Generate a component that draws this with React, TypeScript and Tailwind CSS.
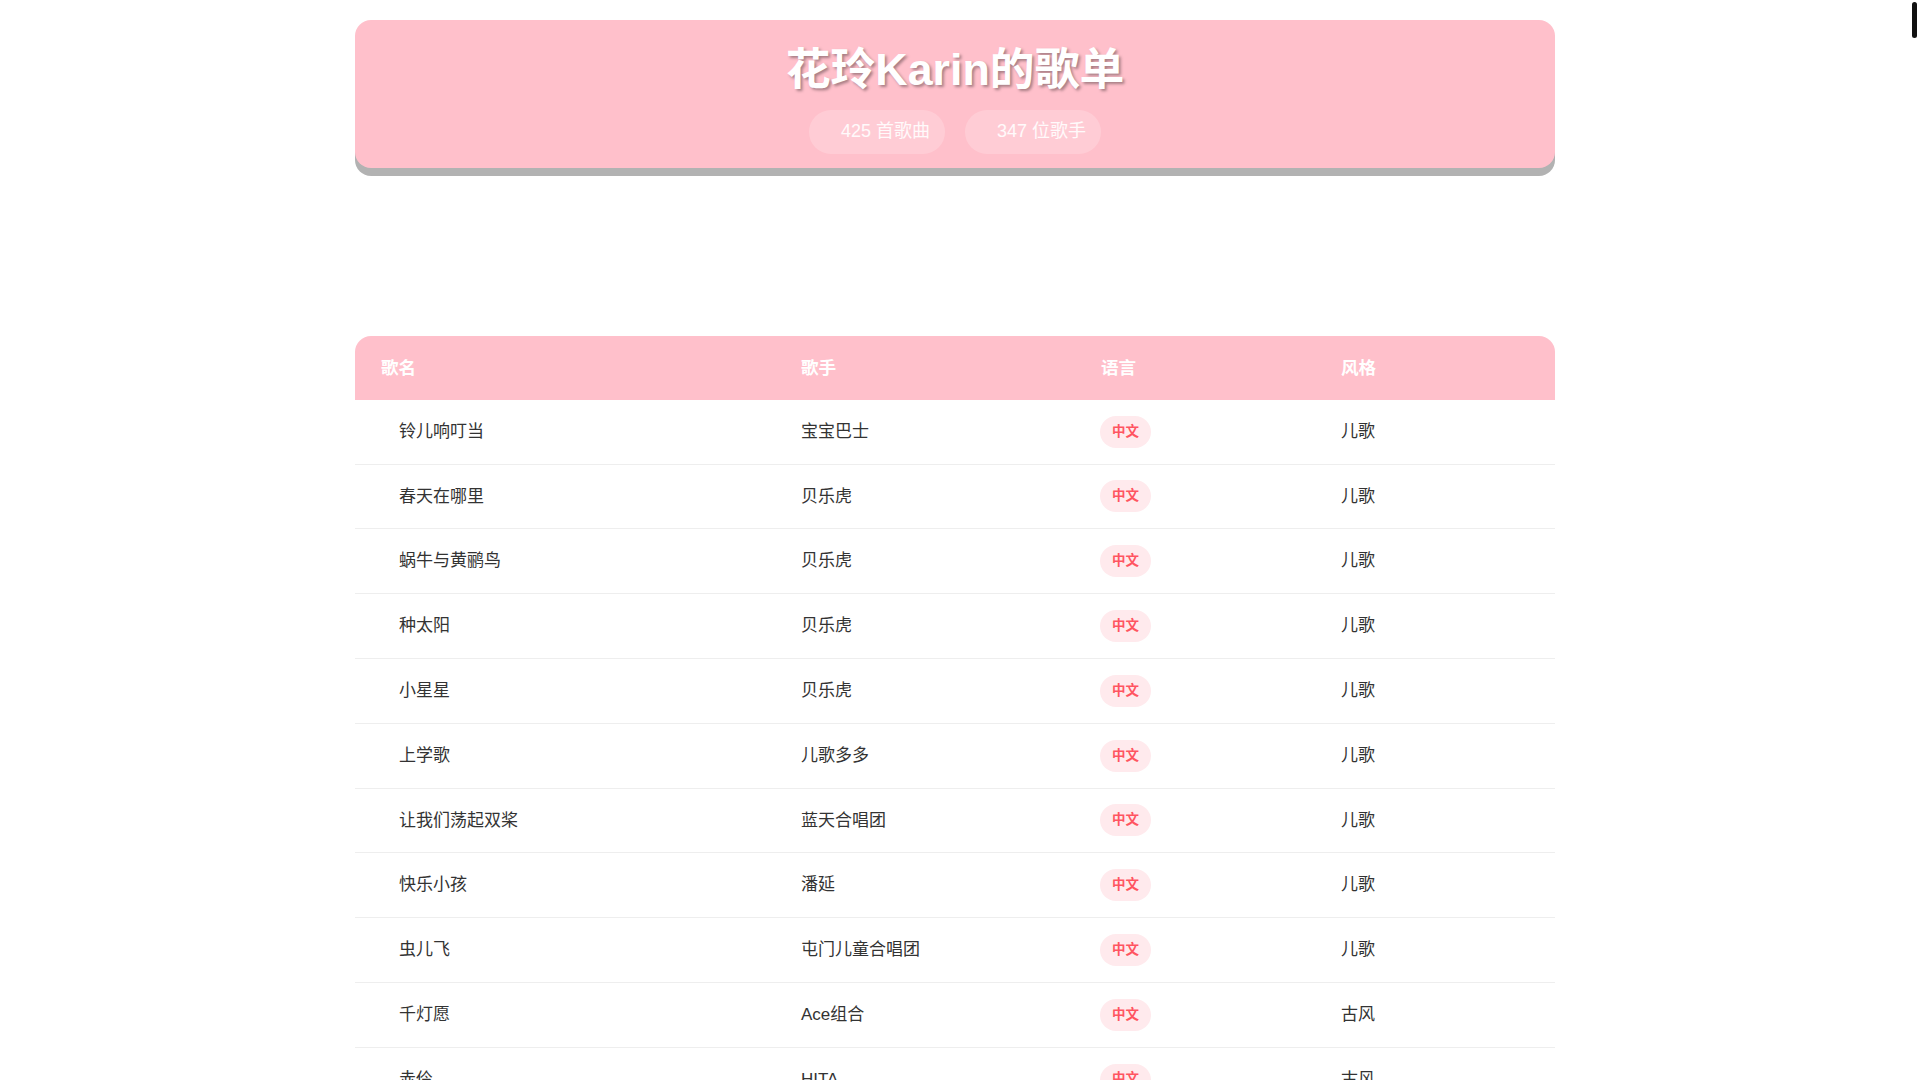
import { useMemo } from "react";

interface Song {
  name: string;
  singer: string;
  lang: string;
  style: string;
}

// 前几首按截图顺序，后面循环补足 425 首
const SONGS: Song[] = [
  { name: "铃儿响叮当", singer: "宝宝巴士", lang: "中文", style: "儿歌" },
  { name: "春天在哪里", singer: "贝乐虎", lang: "中文", style: "儿歌" },
  { name: "蜗牛与黄鹂鸟", singer: "贝乐虎", lang: "中文", style: "儿歌" },
  { name: "种太阳", singer: "贝乐虎", lang: "中文", style: "儿歌" },
  { name: "小星星", singer: "贝乐虎", lang: "中文", style: "儿歌" },
  { name: "上学歌", singer: "儿歌多多", lang: "中文", style: "儿歌" },
  { name: "让我们荡起双桨", singer: "蓝天合唱团", lang: "中文", style: "儿歌" },
  { name: "快乐小孩", singer: "潘延", lang: "中文", style: "儿歌" },
  { name: "虫儿飞", singer: "屯门儿童合唱团", lang: "中文", style: "儿歌" },
  { name: "千灯愿", singer: "Ace组合", lang: "中文", style: "古风" },
  { name: "赤伶", singer: "HITA", lang: "中文", style: "古风" },
  { name: "探窗", singer: "浮生梦", lang: "中文", style: "古风" },
  { name: "不染", singer: "毛不易", lang: "中文", style: "古风" },
  { name: "牵丝戏", singer: "银临", lang: "中文", style: "古风" },
  { name: "锦鲤抄", singer: "银临", lang: "中文", style: "古风" },
];

const TOTAL = 425;
const SINGERS = 347;

function Pill({ children }: { children: React.ReactNode }) {
  return (
    <span className="flex h-[44px] items-center rounded-full bg-white/20 pl-[32px] pr-[15px] text-[18px] text-white/90">
      {children}
    </span>
  );
}

function Header() {
  return (
    <div className="rounded-[16px] bg-[#ffc0cb] pt-[23px] pb-[14px] text-center shadow-[0_8px_0_rgba(0,0,0,0.3)]">
      <h1 className="text-[44.8px] font-bold leading-[1.2] text-white [text-shadow:2px_2px_3px_rgba(0,0,0,0.35)]">
        花玲Karin的歌单
      </h1>
      <div className="mt-[13px] flex justify-center gap-[20px]">
        <Pill>{TOTAL} 首歌曲</Pill>
        <Pill>{SINGERS} 位歌手</Pill>
      </div>
    </div>
  );
}

function Row({ song }: { song: Song }) {
  return (
    <div className="grid h-[64.8px] grid-cols-[420px_300px_240px_240px] items-center border-b border-[#eeeeee] text-[17px] text-[#333]">
      <div className="pl-[44px] pr-[26px]">{song.name}</div>
      <div className="px-[26px]">{song.singer}</div>
      <div className="px-[25px]">
        <span className="inline-flex h-[32px] items-center rounded-full bg-[#ffeaed] px-[12px] text-[13.5px] font-semibold text-[#ff5561]">
          {song.lang}
        </span>
      </div>
      <div className="px-[26px]">{song.style}</div>
    </div>
  );
}

function SongTable() {
  const rows = useMemo(
    () => Array.from({ length: TOTAL }, (_, i) => SONGS[i % SONGS.length]),
    []
  );
  return (
    <div className="overflow-hidden rounded-t-[16px]">
      <div className="grid h-[64px] grid-cols-[420px_300px_240px_240px] items-center bg-[#ffc0cb] text-[17.6px] font-bold text-white">
        <div className="px-[26px]">歌名</div>
        <div className="px-[26px]">歌手</div>
        <div className="px-[26px]">语言</div>
        <div className="px-[26px]">风格</div>
      </div>
      {rows.map((s, i) => (
        <Row key={i} song={s} />
      ))}
    </div>
  );
}

export default function App() {
  return (
    <div className="bg-white pr-[10px] font-['Liberation_Sans','Noto_Sans_CJK_SC',sans-serif]">
      <div className="mx-auto w-[1200px] pt-[20px] pb-[40px]">
        <Header />
        <div className="mt-[168px]">
          <SongTable />
        </div>
      </div>
      {/* 自定义滚动条滑块 */}
      <div className="fixed top-[2px] right-[3px] h-[36px] w-[5px] rounded-full bg-[#111]" />
    </div>
  );
}
